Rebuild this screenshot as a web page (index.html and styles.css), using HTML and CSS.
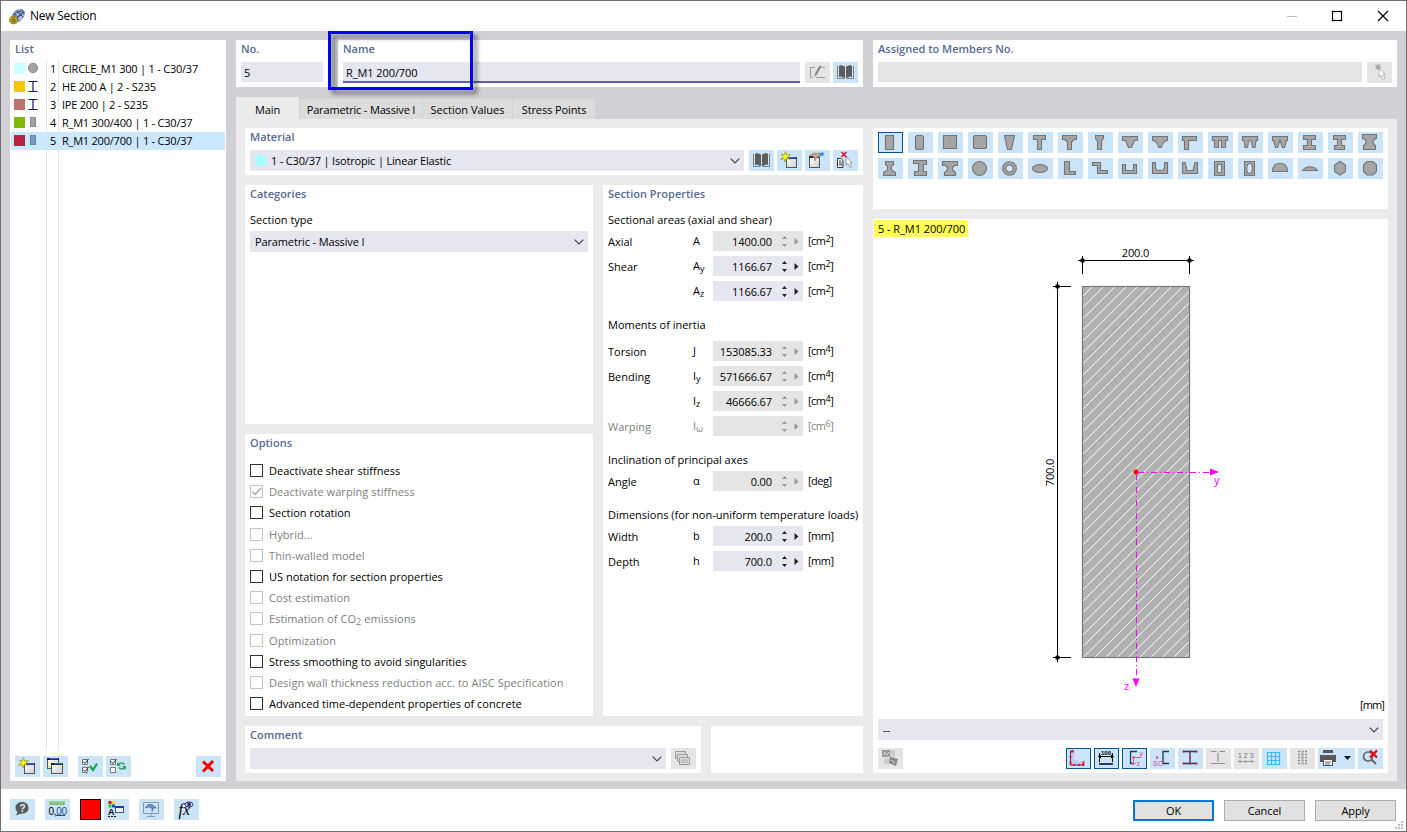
FILE: index.html
```html
<!DOCTYPE html>
<html lang="en">
<head>
<meta charset="utf-8">
<title>New Section</title>
<link rel="stylesheet" href="styles.css">
</head>
<body>
<svg class="defs" width="0" height="0" aria-hidden="true">
  <defs>
    <linearGradient id="paper" x1="0" y1="0" x2="1" y2="1"><stop offset="0" stop-color="#fff"/><stop offset="1" stop-color="#ccc"/></linearGradient>
    <symbol id="chevron" viewBox="0 0 10 6"><path d="M.7 .7L5 5L9.3 .7" fill="none" stroke="#444" stroke-width="1.2"/></symbol>
    <symbol id="spin" viewBox="0 0 20 20"><path d="M1 8L3.500 5L6 8zM1 13L3.500 16L6 13zM13.500 7V14L17.500 10.500z"/></symbol>
    <symbol id="book" viewBox="0 0 25 21"><path d="M6 4L8 3L12 4.500V16.500L8 14.500L6 15zM13 4.500L17 3L19 4V15L17 14.500L13 16.500z" fill="#5c5c5c"/><path d="M4.500 4V16.500H11M20.500 4V16.500H14" fill="none" stroke="#666" stroke-width=".8"/></symbol>
    <symbol id="newwin" viewBox="0 0 25 21"><rect x="9.500" y="7.500" width="10" height="10" fill="url(#paper)" stroke="#555"/><path d="M9 7h11v2H9z" fill="#222"/><path d="M12 7h7v1.500h-7z" fill="#45f"/><path d="M8.500 1.500L9.700 5L13.500 4.500L10.500 7L13 9.500L9.500 8.500L8 12L7.200 8.500L3.500 9.500L6.200 6.700L4 4L7.300 5z" fill="#ff0" stroke="#8b8b28" stroke-width=".7"/></symbol>
    <symbol id="copywin" viewBox="0 0 25 21"><g stroke="#555"><rect x="4.500" y="2.500" width="11" height="10" fill="url(#paper)"/><rect x="8.500" y="7.500" width="11" height="10" fill="url(#paper)"/></g><path d="M4 2h12v2H4zM8 7h12v2H8z" fill="#222"/><path d="M7 2h8v1.300H7zM11 7h8v1.300h-8z" fill="#45f"/></symbol>
    <symbol id="editwin" viewBox="0 0 25 21"><rect x="4.500" y="7.500" width="10" height="10" fill="url(#paper)" stroke="#555"/><path d="M4 6h10v2H4z" fill="#222"/><path d="M5 5L9 3L15 3.500L15 6L11 8L10 11L9 7L7 6z" fill="#c6a58c" stroke="#8c7465" stroke-width=".6"/><path d="M14 3L18 2L19.500 5L15 6.500z" fill="#4f91d0"/></symbol>
    <symbol id="pick" viewBox="0 0 25 21"><path d="M4.500 8.500H8L10 11V17.500H4.500z" fill="#fff" stroke="#333"/><path d="M6 11h2M6 13h3M6 15h3" stroke="#333"/><path d="M13 6.500V15L15 13.500L17 17.500L18.700 16.500L17 12.700H19z" fill="#fff" stroke="#888" stroke-width=".8"/><path d="M8.500 2L13.500 7M13.500 2L8.500 7" stroke="#e00014" stroke-width="1.300"/></symbol>
    <symbol id="pickgray" viewBox="0 0 25 21"><path d="M12 6.500V15L14 13.500L16 17.500L18 16.500L16 12.700H18.500z" fill="#fff" stroke="#b5b5b5"/><path d="M8.500 2.500L13.500 7.500M13.500 2.500L8.500 7.500M8 5h6M11 2v6" stroke="#999"/></symbol>
    <symbol id="ibeam" viewBox="0 0 12 14"><path d="M1.500 1.500H10.500M1.500 11.500H10.500M6 1.500V11.500" fill="none" stroke="#101080" stroke-width="1.200"/></symbol>
  </defs>
</svg>
<div class="window">
  <header class="titlebar">
    <svg class="app-icon" width="17" height="17" viewBox="0 0 17 17"><path d="M3 7L7 2L13 1L16 4L15 9L10 14L5 12z" fill="#6780ae"/><path d="M6 4L11 2L12 5L8 8zM9 10L14 5L15 8L11 13z" fill="#b2c2de"/><path d="M8 3L14 9M5 6L12 3M8 10L15 4" stroke="#344365"/><circle cx="4.500" cy="12" r="4" fill="#d2ad27" stroke="#92731e" stroke-width=".8"/><path d="M6 9.500C3 9 3 12 3.200 14H6V11.500H3.500" fill="none" stroke="#695315"/></svg>
    <span class="title">New Section</span>
    <svg width="110" height="14" viewBox="0 0 110 14"><path d="M0 7.500H10" stroke="#bbb"/><rect x="45.500" y="2.500" width="9" height="9" fill="none" stroke="#000" stroke-width="1.200"/><path d="M91 2L101 12M101 2L91 12" stroke="#000" stroke-width="1.200"/></svg>
  </header>

  <main class="body">
    <section class="panel list">
      <h2>List</h2>
      <ul>
        <li><i class="swatch cyan"></i><svg width="12" height="14"><circle cx="6" cy="6" r="4.700" fill="#a3a3a3" stroke="#8c8c8c"/></svg><b>1</b><span>CIRCLE_M1 300 | 1 - C30/37</span></li>
        <li><i class="swatch yellow"></i><svg width="12" height="14"><use href="#ibeam"/></svg><b>2</b><span>HE 200 A | 2 - S235</span></li>
        <li><i class="swatch rose"></i><svg width="12" height="14"><use href="#ibeam"/></svg><b>3</b><span>IPE 200 | 2 - S235</span></li>
        <li><i class="swatch green"></i><svg width="12" height="14"><rect x="3.500" y="1.500" width="5" height="9" fill="#a3a3a3" stroke="#888"/></svg><b>4</b><span>R_M1 300/400 | 1 - C30/37</span></li>
        <li class="selected"><i class="swatch crimson"></i><svg width="12" height="14"><rect x="3.500" y="1.500" width="5" height="9" fill="#789abb" stroke="#6588ac"/></svg><b>5</b><span>R_M1 200/700 | 1 - C30/37</span></li>
      </ul>
      <div class="toolbar">
        <button><svg><use href="#newwin"/></svg></button>
        <button><svg><use href="#copywin"/></svg></button>
        <button class="apart"><svg><path d="M4.500 3.500h5v5h-5zM4.500 11.500h5v5h-5z" fill="#fff" stroke="#777"/><path d="M5 5.500L7 7.500L10.500 3M5 13.500L7 15.500L10.500 11" fill="none" stroke="#222"/><path d="M12 10L15 14L19 7.500" fill="none" stroke="#10a35b" stroke-width="2.200"/></svg></button>
        <button><svg><path d="M4.500 3.500h5v5h-5zM4.500 11.500h5v5h-5z" fill="#fff" stroke="#777"/><path d="M5 5.500L7 7.500L10.500 3" fill="none" stroke="#222"/><path d="M12.500 8.500C14 6.500 17 6.500 18.500 8.500M19 11C17.500 13.500 14.500 13.500 13 11.500" fill="none" stroke="#2ca45d" stroke-width="1.500"/><path d="M11 6V10H15zM20 14V10H16z" fill="#2ca45d"/></svg></button>
        <button class="right"><svg><path d="M7 5.500L17 15M17 5L7 15.500" stroke="#f00000" stroke-width="3"/></svg></button>
      </div>
    </section>

    <div class="top">
      <section class="panel no"><h2>No.</h2><div class="field">5</div></section>
      <section class="panel name"><h2>Name</h2>
        <div class="line"><div class="field focus">R_M1 200/700</div>
          <button class="off"><svg><path d="M10 5.500H5.500V15.500H8M11 15.500h9M17 5.500h3" fill="none" stroke="#999"/><path d="M9 15L10 11.500L14.500 3.500L16.500 4.500L12 12.500z" fill="#888"/></svg></button>
          <button><svg><use href="#book"/></svg></button></div>
        <div class="highlight"></div>
      </section>
      <section class="panel assigned"><h2>Assigned to Members No.</h2><div class="line"><div class="field disabled"></div><button class="off"><svg><use href="#pickgray"/></svg></button></div></section>
    </div>

    <nav class="tabs"><span class="active">Main</span><span>Parametric - Massive I</span><span>Section Values</span><span>Stress Points</span></nav>

    <div class="content">
      <div class="left">
        <section class="panel material"><h2>Material</h2>
          <div class="line"><div class="field select"><span><i class="tint"></i>1 - C30/37 | Isotropic | Linear Elastic</span><svg class="chev"><use href="#chevron"/></svg></div>
            <button><svg><use href="#book"/></svg></button><button><svg><use href="#newwin"/></svg></button><button><svg><use href="#editwin"/></svg></button><button><svg><use href="#pick"/></svg></button></div>
        </section>
        <section class="panel categories"><h2>Categories</h2><p>Section type</p><div class="field select"><span>Parametric - Massive I</span><svg class="chev"><use href="#chevron"/></svg></div></section>
        <section class="panel options"><h2>Options</h2>
          <ul>
            <li><i></i>Deactivate shear stiffness</li>
            <li class="dim"><i><svg width="11" height="11"><path d="M1 5.500L4 8.500L10 2" fill="none" stroke="#aaa" stroke-width="1.400"/></svg></i>Deactivate warping stiffness</li>
            <li><i></i>Section rotation</li>
            <li class="dim"><i></i>Hybrid...</li>
            <li class="dim"><i></i>Thin-walled model</li>
            <li><i></i>US notation for section properties</li>
            <li class="dim"><i></i>Cost estimation</li>
            <li class="dim"><i></i><span>Estimation of CO<sub>2</sub> emissions</span></li>
            <li class="dim"><i></i>Optimization</li>
            <li><i></i>Stress smoothing to avoid singularities</li>
            <li class="dim"><i></i>Design wall thickness reduction acc. to AISC Specification</li>
            <li><i></i>Advanced time-dependent properties of concrete</li>
          </ul>
        </section>
        <section class="panel properties"><h2>Section Properties</h2>
          <h3>Sectional areas (axial and shear)</h3>
          <div class="prop"><span>Axial</span><span>A</span><div class="num off"><span>1400.00</span><svg><use href="#spin"/></svg></div><span>[cm<sup>2</sup>]</span></div>
          <div class="prop"><span>Shear</span><span>A<sub>y</sub></span><div class="num"><span>1166.67</span><svg><use href="#spin"/></svg></div><span>[cm<sup>2</sup>]</span></div>
          <div class="prop"><span></span><span>A<sub>z</sub></span><div class="num"><span>1166.67</span><svg><use href="#spin"/></svg></div><span>[cm<sup>2</sup>]</span></div>
          <h3 class="inertia">Moments of inertia</h3>
          <div class="prop"><span>Torsion</span><span>J</span><div class="num off"><span>153085.33</span><svg><use href="#spin"/></svg></div><span>[cm<sup>4</sup>]</span></div>
          <div class="prop"><span>Bending</span><span>I<sub>y</sub></span><div class="num off"><span>571666.67</span><svg><use href="#spin"/></svg></div><span>[cm<sup>4</sup>]</span></div>
          <div class="prop"><span></span><span>I<sub>z</sub></span><div class="num off"><span>46666.67</span><svg><use href="#spin"/></svg></div><span>[cm<sup>4</sup>]</span></div>
          <div class="prop dim"><span>Warping</span><span>I<sub>ω</sub></span><div class="num off"><span></span><svg><use href="#spin"/></svg></div><span>[cm<sup>6</sup>]</span></div>
          <h3 class="spaced">Inclination of principal axes</h3>
          <div class="prop"><span>Angle</span><span>α</span><div class="num off"><span>0.00</span><svg><use href="#spin"/></svg></div><span>[deg]</span></div>
          <h3 class="spaced">Dimensions (for non-uniform temperature loads)</h3>
          <div class="prop"><span>Width</span><span>b</span><div class="num"><span>200.0</span><svg><use href="#spin"/></svg></div><span class="mm">[mm]</span></div>
          <div class="prop"><span>Depth</span><span>h</span><div class="num"><span>700.0</span><svg><use href="#spin"/></svg></div><span class="mm">[mm]</span></div>
        </section>
        <div class="bottom">
          <section class="panel comment"><h2>Comment</h2><div class="line"><div class="field select"><span></span><svg class="chev"><use href="#chevron"/></svg></div><button class="off"><svg><g fill="#ddd" stroke="#999"><path d="M4.500 3.500h10v7h-10z"/><path d="M6.500 6.500h10v7h-10z"/><path d="M8.500 9.500h10v7h-10z"/></g><path d="M10 12h7M10 14h7" stroke="#aaa"/></svg></button></div></section>
          <section class="panel"></section>
        </div>
      </div>

      <div class="right-col">
        <section class="panel shapes">
          <button class="on"><svg><path d="M7.500 3.500H15.500V17.500H7.500z"/></svg></button>
          <button><svg><rect x="7.500" y="3.500" width="8" height="14" rx="2"/></svg></button>
          <button><svg><path d="M5.500 3.500H18.500V16.500H5.500z"/></svg></button>
          <button><svg><rect x="5.500" y="3.500" width="13" height="13" rx="2"/></svg></button>
          <button><svg><path d="M6.500 3.500H16.500L13.500 17.500H9.500z"/></svg></button>
          <button><svg><path d="M5.500 3.500H17.500V7.500H13.500V17.500H9.500V7.500H5.500z"/></svg></button>
          <button><svg><path d="M4.500 3.500H18.500V7.500H16.500L13.500 10V17.500H9.500V10L6.500 7.500H4.500z"/></svg></button>
          <button><svg><path d="M7.500 3.500H15.500V6.500L13.500 9V17.500H9.500V9L7.500 6.500z"/></svg></button>
          <button><svg><path d="M4.500 4.500H19.500V8.500H16.500L13.500 15.500H10.500L7.500 8.500H4.500z"/></svg></button>
          <button><svg><path d="M4.500 4.500H19.500V8.500C16 8.500 14.500 11 13.500 15.500H10.500C9.500 11 8 8.500 4.500 8.500z"/></svg></button>
          <button><svg><path d="M4.500 4.500H18.500V8.500H10.500V17.500H6.500V8.500H4.500z"/></svg></button>
          <button><svg><path d="M4.500 4.500H19.500V8.500H17.500V15.500H13.500V8.500H10.500V15.500H6.500V8.500H4.500z"/></svg></button>
          <button><svg><path d="M4.500 4.500H19.500V8.500H18L17 15.500H14.500L13.500 9.500Q12 7.500 10.500 9.500L9.500 15.500H7L6 8.500H4.500z"/></svg></button>
          <button><svg><path d="M4.500 4.500H19.500V8.500H18.500L16.500 15.500H14.500L12 8.500L9.500 15.500H7.500L5.500 8.500H4.500z"/></svg></button>
          <button><svg><path d="M5.500 3.500H17.500V7.500H13.500V13.500H17.500V17.500H5.500V13.500H9.500V7.500H5.500z"/></svg></button>
          <button><svg><path d="M5.500 3.500H17.500V7.500H13.500V13.500H16.500V17.500H6.500V13.500H9.500V7.500H5.500z"/></svg></button>
          <button><svg><path d="M4.500 2.500H18.500V6.500C14 7.500 14 12 17.500 13.500V17.500H5.500V13.500C9 12 9 7.500 4.500 6.500z"/></svg></button>
          <button><svg><path d="M7.500 3.500H15.500V6.500L13.500 8.500V12L17.500 14.500V17.500H5.500V14.500L9.500 12V8.500L7.500 6.500z"/></svg></button>
          <button><svg><path d="M5.500 2.500H18.500V6.500H15.500V13.500H18.500V17.500H6.500V13.500H10.500V5.500H5.500z"/></svg></button>
          <button><svg><path d="M4.500 3.500H19.500V7.500H16.500L14.500 9.500V12L17.500 14.500V17.500H6.500V14.500L9.500 12V9.500L7.500 7.500H4.500z"/></svg></button>
          <button><svg><circle cx="11.500" cy="10.500" r="7"/></svg></button>
          <button><svg><circle cx="11.500" cy="10.500" r="6.800"/><circle cx="11.500" cy="10.500" r="3.500" class="hole"/></svg></button>
          <button><svg><ellipse cx="12" cy="10.500" rx="7.500" ry="4"/></svg></button>
          <button><svg><path d="M6.500 3.500H11.500V13.500H17.500V16.500H6.500z"/></svg></button>
          <button><svg><path d="M4.500 4.500H12.500V12.500H19.500V15.500H9.500V7.500H4.500z"/></svg></button>
          <button><svg><path d="M4.500 6.500H7.500V12.500H15.500V6.500H18.500V15.500H4.500z"/></svg></button>
          <button><svg><path d="M4.500 4.500H7.500V10Q8 12.500 12 12.500T16.500 10V4.500H19.500V15.500H4.500z"/></svg></button>
          <button><svg><path d="M4.500 4.500H7L9 12.500H15L17 4.500H19.500V15.500H4.500z"/></svg></button>
          <button><svg><path d="M6.500 3.500H16.500V17.500H6.500z"/><path class="hole" d="M9.500 6.500H13.500V14.500H9.500z"/></svg></button>
          <button><svg><path d="M6.500 3.500H16.500V17.500H6.500z"/><ellipse class="hole" cx="11.500" cy="10.500" rx="2.800" ry="5"/></svg></button>
          <button><svg><path d="M4.500 13.500V12C6 3 18 3 19.500 12V13.500z"/></svg></button>
          <button><svg><path d="M4.500 12.500C8 7.500 16 7.500 19.500 12.500z"/></svg></button>
          <button><svg><path d="M12 3.500L17.500 7V13.500L12 17L6.500 13.500V7z"/></svg></button>
          <button><svg><path d="M9 3.500H15L18.500 7V13.500L15 17H9L5.500 13.500V7z"/></svg></button>
        </section>
        <section class="panel preview">
          <div class="tag">5 - R_M1 200/700</div>
          <svg class="drawing" width="515" height="460" viewBox="873 237 515 460">
            <rect x="1082.500" y="286.500" width="107" height="371" fill="#b1b1b1"/>
            <svg x="1083" y="287" width="106" height="370" viewBox="1083 287 106 370">
              <path d="M1083 296l120-120m-120 131.300l120-120m-120 131.300l120-120m-120 131.300l120-120m-120 131.300l120-120m-120 131.300l120-120m-120 131.300l120-120m-120 131.300l120-120m-120 131.300l120-120m-120 131.300l120-120m-120 131.300l120-120m-120 131.300l120-120m-120 131.300l120-120m-120 131.300l120-120m-120 131.300l120-120m-120 131.300l120-120m-120 131.300l120-120m-120 131.300l120-120m-120 131.300l120-120m-120 131.300l120-120m-120 131.300l120-120m-120 131.300l120-120m-120 131.300l120-120m-120 131.300l120-120m-120 131.300l120-120m-120 131.300l120-120m-120 131.300l120-120m-120 131.300l120-120m-120 131.300l120-120m-120 131.300l120-120m-120 131.300l120-120m-120 131.300l120-120m-120 131.300l120-120m-120 131.300l120-120m-120 131.300l120-120m-120 131.300l120-120m-120 131.300l120-120m-120 131.300l120-120m-120 131.300l120-120m-120 131.300l120-120m-120 131.300l120-120m-120 131.300l120-120m-120 131.300l120-120" fill="none" stroke="#fff"/>
            </svg>
            <rect x="1082.500" y="286.500" width="107" height="371" fill="none" stroke="#777" stroke-width="1.200"/>
            <path d="M1078 260.500H1194M1082.500 256V274M1189.500 256V274M1057.500 282V662M1053 286.500H1071M1053 657.500H1071" stroke="#000"/>
            <g><circle cx="1082.500" cy="260.500" r="2.300"/><circle cx="1189.500" cy="260.500" r="2.300"/><circle cx="1057.500" cy="286.500" r="2.300"/><circle cx="1057.500" cy="657.500" r="2.300"/></g>
            <path d="M1138 472.500H1210" stroke="#f0f" stroke-dasharray="6 3 1 3"/><path d="M1136.500 474V678" stroke="#f0f" stroke-dasharray="6 3 1 3"/>
            <path d="M1210 468.500L1219 472L1210 475.500zM1132.500 678.500H1139.500L1136 687z" fill="#f0f"/><circle cx="1136" cy="472" r="2.400" fill="#f00"/>
            <text x="1135.500" y="257" text-anchor="middle">200.0</text><text transform="translate(1054 472.500) rotate(-90)" text-anchor="middle">700.0</text>
            <text x="1214" y="484" class="axis">y</text><text x="1124" y="690" class="axis">z</text>
          </svg>
          <div class="unit">[mm]</div>
          <div class="field select"><span>--</span><svg class="chev"><use href="#chevron"/></svg></div>
          <div class="toolbar">
            <button class="off"><svg><path d="M4 2H12V9H4z" fill="#999"/><path d="M12 2H17V10H12zM6 10H12V16H6z" fill="#ccc"/><path d="M6 4L9 7L11 4M5 7L7 5" fill="none" stroke="#ddd"/><path d="M12 9L20 11L18 18L11 15z" fill="#888"/><path d="M13 12L17 15" stroke="#ddd"/></svg></button>
            <button class="on right"><svg><path d="M5 3H8V11Q9 13.500 12 13.500H17V17.500H5z" fill="#c9c3ee"/><path d="M8 3H4.500V17H17.500V13.500" fill="none" stroke="#35406f"/><path d="M4.500 3.500H8M4.500 8V10M4.500 13V17M7 17H9M12 17H14M16 17H17.500V13.500" fill="none" stroke="#e81224" stroke-width="1.800"/></svg></button>
            <button class="on"><svg><path d="M5.500 5V14M18.500 5V14M4 8.500H20" stroke="#111"/><path d="M4 8.500L7 6.500V10.500zM20 8.500L17 6.500V10.500z"/><path d="M5 15H19V17H5z" fill="#263765"/><text x="12" y="6.800" text-anchor="middle" class="tiny">100</text></svg></button>
            <button class="on"><svg><path d="M15 3.500H8.500V15.500H11" fill="none" stroke="#253461" stroke-width="1.300"/><path d="M11 9.500H19M11.500 9V17M9.500 14.500L11.500 17L13.500 14.500" fill="none" stroke="#cf5f9f"/><circle cx="11.500" cy="9.500" r="1.300" fill="#d9529b"/><text x="17.500" y="8" class="mini">y</text><text x="14.500" y="17.500" class="mini">z</text></svg></button>
            <button><svg><path d="M19 3.500H13V15.500H19" fill="none" stroke="#253461" stroke-width="1.300"/><circle cx="7" cy="9.500" r="1.300" fill="#d9529b"/><text x="3" y="17.500" class="mini">SC</text></svg></button>
            <button><svg><path d="M5 3.500H19M5 15.500H19M12 3V16" stroke="#253461" stroke-width="1.300"/><path d="M4.500 3.500h2M11 3.500h2M17.500 3.500h2M4.500 15.500h2M11 15.500h2M17.500 15.500h2M12 8.500v2" stroke="#e02030" stroke-width="1.800"/></svg></button>
            <button class="off"><svg><path d="M5 3.500H10.500M13.500 3.500H19M5 15.500H19M12 5V14" stroke="#909090" stroke-width="1.200"/></svg></button>
            <button class="off"><svg><text x="4" y="10" class="count">1 2 3</text><path d="M4 13.500H20M6 12v3M12 12v3M18 12v3" stroke="#999"/></svg></button>
            <button><svg><path d="M5.500 4.500H17.500V16.500H5.500zM9.500 4V17M13.500 4V17M5 8.500H18M5 12.500H18" fill="none" stroke="#43b6ff" stroke-width="1.200"/></svg></button>
            <button class="off"><svg><path d="M8 3.500H17M8 6.500H17M8 9.500H17M8 12.500H17M8 15.500H17" stroke="#888" stroke-width="1.400" stroke-dasharray="2 1 3 1"/><path d="M11 3h3v13h-3z" fill="#bbb" opacity=".65"/></svg></button>
            <button class="print"><svg><path d="M5 2h10v3H5zM2 7h16v7H2z" fill="#595959"/><rect x="5.500" y="11.500" width="9" height="6" fill="#fff" stroke="#555"/><path d="M7 14h6M7 16h5" stroke="#666"/><path d="M26 8H33L29.500 12z" fill="#111"/></svg></button>
            <button><svg><circle cx="10" cy="8.500" r="4.500" fill="none" stroke="#666" stroke-width="1.700"/><path d="M13 11L18 16" stroke="#666" stroke-width="2"/><path d="M12 2.500L19 9.500M19 2.500L12 9.500" stroke="#e00010" stroke-width="2.200"/></svg></button>
          </div>
        </section>
      </div>
    </div>
  </main>

  <footer>
    <button><svg><path d="M12 3C16 3 18.500 5.500 18.500 9S16 14.500 12 14.500Q9.500 15 6 16.500L7.500 13Q5.500 11.500 5.500 9C5.500 5.500 8 3 12 3z" fill="#5b5b5b"/><text x="12.500" y="12.500" text-anchor="middle" class="question">?</text></svg></button>
    <button class="g10"><svg><path d="M4 2H20V6H4z" fill="#8fd08a"/><path d="M6.500 4v2M9.500 4v2M12.500 4v2M15.500 4v2M18.500 4v2" stroke="#5a9c5a" stroke-width=".8"/><text x="3.500" y="15.500" class="digits amount">0,<tspan fill="#254a8e">00</tspan></text><path d="M11 16.500h9" stroke="#254a8e"/></svg></button>
    <div class="color"></div>
    <button class="g3"><svg><path d="M4.500 2h3v3h-3z" fill="#e01010"/><path d="M8 2h3v3H8z" fill="#ffd800"/><path d="M4.500 5.500h3v3h-3z" fill="#15d015"/><path d="M8 5.500h3v3H8z" fill="#2244e5"/><text x="4" y="16" class="digits">A</text><path d="M4 17.500h8" stroke="#111" stroke-dasharray="2 1"/><rect x="11.500" y="7.500" width="8" height="6" fill="#eee" stroke="#555"/><path d="M11 7h9v2h-9z" fill="#223b9b"/></svg></button>
    <button class="g10"><svg><path d="M4.500 3.500H19.500V14.500H4.500zM12 15V17M8 17.500H16" fill="none" stroke="#8c9aa8"/><path d="M6 9L9 5.500H13L17.500 9L14.500 9L13 12.500V9L9 8z" fill="#6692bd" stroke="#4b7599" stroke-width=".7"/></svg></button>
    <button class="g10"><svg><text x="4.500" y="16" class="formula">fx</text><ellipse cx="15" cy="5.500" rx="4" ry="2.500" fill="#dde" stroke="#303065"/><circle cx="15" cy="5.500" r="2" fill="#303070"/></svg></button>
    <div class="actions"><button class="cmd default">OK</button><button class="cmd">Cancel</button><button class="cmd">Apply</button></div>
    <svg class="grip" width="9" height="9"><path d="M6 0h2v2h-2zM3 3h2v2H3zM6 3h2v2h-2zM0 6h2v2H0zM3 6h2v2H3zM6 6h2v2h-2z" fill="#bbb"/></svg>
  </footer>
</div>
</body>
</html>
```
FILE: styles.css
```css
* { box-sizing: border-box; }
body { margin: 0; font: 11px/18px "Open Sans", "Noto Sans", sans-serif; color: #000; }
.defs { position: absolute; }
h2, h3, p, ul { margin: 0; padding: 0; font-size: 11px; font-weight: normal; list-style: none; }
i, b { font-style: normal; font-weight: normal; }
svg { display: block; flex: none; }

.window { width: 1407px; height: 832px; display: flex; flex-direction: column; border: 1px solid #707070; background: #fff; overflow: hidden; }
.titlebar { height: 30px; flex: none; display: flex; align-items: center; padding: 0 16px 0 8px; }
.title { flex: 1; margin-left: 4px; font-size: 12px; letter-spacing: -.25px; }
.titlebar > svg:last-child { margin-right: -7px; }

.body { height: 758px; flex: none; background: #d1d0d5; padding: 9px 9px 8px; display: grid; grid-template-columns: 216px 1161px; grid-template-rows: 47px 32px 662px; column-gap: 10px; }
.panel { background: #fff; padding: 0 5px; min-width: 0; }
.panel h2 { height: 22px; color: #596a92; font-weight: 600; }
.list { grid-row: 1 / 4; display: flex; flex-direction: column; padding: 0 1px 4px; }
.list h2 { height: 20px; padding-left: 4px; flex: none; }
.list ul { height: 690px; background: linear-gradient(to right, transparent 35px, #e5e5e5 35px, #e5e5e5 36px, transparent 36px, transparent 47px, #e5e5e5 47px, #e5e5e5 48px, transparent 48px); }
.list li { height: 18px; display: flex; align-items: center; padding-left: 3px; letter-spacing: -.22px; }
.list li svg { margin: 0 0 0 2px; }
.list li b { width: 20px; text-align: right; padding-right: 3px; }
.list li span { margin-left: 3px; }
.list .selected { background: #cce8ff; }
.swatch { width: 11px; height: 11px; margin-bottom: 2px; }
.cyan { background: #ccffff; } .yellow { background: #f7c500; } .rose { background: #bd7272; } .green { background: #7aba00; } .crimson { background: #b32445; }

.toolbar { display: flex; gap: 3px; }
.list .toolbar { margin-top: auto; padding: 0 4px; }
button { width: 25px; height: 21px; flex: none; padding: 0; border: 0; background: #cbe4f8; font: inherit; color: inherit; }
button svg { width: 25px; height: 21px; }
button.off { background: #e5e5e5; }
button.on { outline: 1px solid #005499; outline-offset: -1px; }
.apart { margin-left: 7px; }
.right { margin-left: auto; }

.top { display: grid; grid-template-columns: 92px 525px 524px; gap: 10px; }
.name { position: relative; }
.highlight { position: absolute; left: -10px; top: -9px; width: 145px; height: 59px; border: 3px solid #0000fa; filter: drop-shadow(4px 4px 2px rgba(0,0,0,.5)); }
.line { display: flex; gap: 3px; }
.line .field { flex: 1; margin-right: 2px; }
.field { height: 20px; line-height: 21px; padding: 0 5px; background: #e6e6f1; min-width: 0; white-space: nowrap; }
.no .field, .name .field { padding-left: 3px; letter-spacing: -.08px; }
.focus { height: 21px; border-bottom: 2px solid #6360a8; }
.disabled { background: #e5e5e5; }
.select { height: 21px; display: flex; align-items: center; justify-content: space-between; padding-right: 4px; line-height: 21px; letter-spacing: -.13px; }
.material .select { letter-spacing: -.18px; }
.chev { width: 10px; height: 6px; }

.tabs { display: flex; align-items: flex-end; padding-top: 10px; gap: 1px; }
.tabs span { height: 21px; line-height: 21px; background: #dcdcdc; text-align: center; margin-bottom: -1px; white-space: nowrap; letter-spacing: -.1px; }
.tabs span:nth-child(1) { width: 63px; height: 23px; line-height: 25px; background: #ebebeb; }
.tabs span:nth-child(2) { width: 122px; letter-spacing: -.17px; }
.tabs span:nth-child(3) { width: 89px; letter-spacing: 0; }
.tabs span:nth-child(4) { width: 82px; }

.content { background: #ebebeb; padding: 9px 9px 8px; display: grid; grid-template-columns: 618px 515px; gap: 10px; }
.left { display: grid; grid-template-columns: 348px 260px; grid-template-rows: 47px 239px 282px 47px; gap: 10px; }
.material { grid-column: 1 / 3; }
.tint { display: inline-block; width: 11px; height: 11px; background: #a7ffff; vertical-align: -1px; margin-right: 5px; }
.categories p { height: 24px; line-height: 26px; }
.options { grid-column: 1; grid-row: 3; }
.options li { height: 21.2px; padding-top: 1px; display: flex; align-items: center; white-space: nowrap; }
.options ul { padding-top: 4px; }
.options i { width: 13px; height: 13px; border: 1px solid #333; margin: 0 6px 1px 0; }
.dim { color: #808080; }
.options .dim { letter-spacing: .07px; }
.options .dim i { border-color: #c4c4c4; }
sub, sup { font-size: 9px; line-height: 0; }
sub { vertical-align: -2px; } sup { vertical-align: 3px; }
.properties { grid-column: 2; grid-row: 2 / 4; }
.properties h3 { height: 24px; line-height: 26px; white-space: nowrap; letter-spacing: -.01px; }
.prop { height: 20px; margin-bottom: 5px; display: grid; grid-template-columns: 85px 20px 90px 1fr; align-items: center; white-space: nowrap; }
.prop > span:first-child { padding-top: 2px; }
.prop > span:last-child { padding-left: 5px; letter-spacing: -.5px; }
.prop > .mm { letter-spacing: -.9px; }
.num { height: 20px; background: #e6e6f1; display: flex; justify-content: flex-end; line-height: 22px; fill: #222; letter-spacing: -.1px; }
.num.off { background: #e5e5e5; fill: #999; }
.num svg { width: 20px; height: 20px; margin: 0 2px 0 9px; }
.properties .inertia { height: 35px; line-height: 38px; }
.properties .spaced { height: 30px; line-height: 38px; }
.bottom { grid-column: 1 / 3; display: grid; grid-template-columns: 456px 152px; gap: 10px; }

.right-col { display: grid; grid-template-rows: 81px 554px; gap: 10px; }
.shapes { display: grid; grid-template-columns: repeat(17, 25px); grid-auto-rows: 21px; gap: 5px; padding-top: 4px; align-content: start; }
.shapes svg { fill: #a5a5a5; stroke: #747474; stroke-width: 1.1px; }
.shapes .hole { fill: #d5e9f8; }
.preview { display: flex; flex-direction: column; padding: 1px 0 4px; }
.tag { height: 17px; width: 94px; margin-left: 1px; padding-left: 4px; background: #ffff54; line-height: 18px; flex: none; white-space: nowrap; letter-spacing: -.05px; }
.drawing text { font: 11px "Open Sans"; letter-spacing: -.15px; }
.drawing .axis { fill: #f0f; }
.unit { text-align: right; padding-right: 4px; height: 22px; line-height: 16px; letter-spacing: -.9px; }
.preview .field { margin: 0 5px 8px; flex: none; }
.preview .toolbar { padding: 0 5px; }
.print, .print svg { width: 37px; }
.tiny { font: bold 6px "Liberation Sans"; }
.mini { font: 7px "Liberation Sans"; fill: #cf4c98; }
.count { font: 7px "Liberation Sans"; fill: #777; }
.question { font: bold 10px "Liberation Sans"; fill: #dcecf8; }
.digits { font: bold 9px "Liberation Sans"; }
.amount { font-weight: normal; font-size: 10px; letter-spacing: -.3px; }
.formula { font: italic 16px "Liberation Serif"; }

footer { flex: 1; display: flex; align-items: flex-start; padding: 10px 0 0 9px; position: relative; }
.g10 { margin-left: 10px; }
.g3 { margin-left: 3px; }
.color { width: 21px; height: 21px; border: 1px solid #000; background: #f00; margin-left: 10px; }
.actions { display: flex; gap: 10px; margin: 1px 10px 0 auto; }
.cmd { width: 81px; background: #e1e1e1; border: 1px solid #adadad; line-height: 20px; letter-spacing: -.1px; }
.cmd.default { border: 2px solid #0078d7; line-height: 18px; }
.grip { position: absolute; right: 2px; bottom: 1px; }
```
